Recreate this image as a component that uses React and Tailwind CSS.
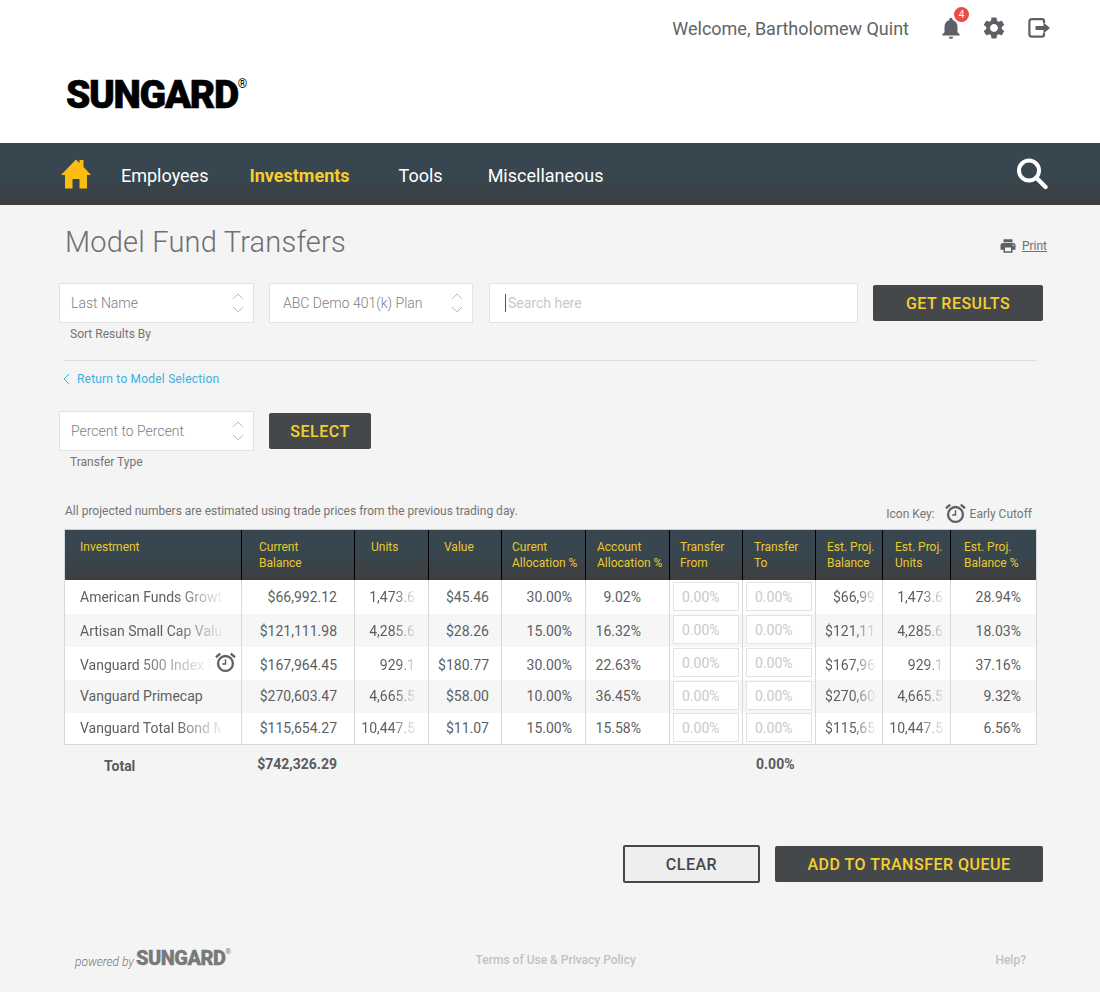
import React from "react";
import { MdNotifications, MdSettings, MdPrint } from "react-icons/md";

function Home() {
  return (
    <svg width="30" height="30" viewBox="0 0 30 30" className="text-[#fbbd14]" fill="currentColor">
      <path d="M15 .5 L18.5 4 V1 H22.5 V8 L30 16 H26 V29.5 H18.5 V20 H11.5 V29.5 H4 V16 H0 Z" />
    </svg>
  );
}

function Exit() {
  return (
    <svg width="24" height="20" viewBox="0 0 24 20" fill="none">
      <path d="M16 5 V3.2 Q16 1.2 14 1.2 H4 Q1.4 1.2 1.4 3.6 V16.2 Q1.4 18.6 4 18.6 H14 Q16 18.6 16 16.8 V15" stroke="#5d6166" strokeWidth="2.2" />
      <path d="M7.5 8 H15.5 V4.5 L22 10 L15.5 15.5 V12 H7.5 Z" fill="#5d6166" />
    </svg>
  );
}

function Search() {
  return (
    <svg width="32" height="32" viewBox="0 0 32 32" fill="none" stroke="#fff" strokeWidth="4">
      <circle cx="13" cy="12.6" r="10" />
      <path d="M20.5 20 L29.5 29" strokeLinecap="round" strokeWidth="4.4" />
    </svg>
  );
}

function Alarm({ size = 22 }) {
  return (
    <svg width={size} height={size} viewBox="0 0 22 22" fill="none" stroke="#5d6166">
      <circle cx="11" cy="12" r="7.8" strokeWidth="2.4" />
      <path d="M11 7.5 V12.5 H7.5" strokeWidth="1.5" />
      <path d="M1 5.5 L5.5 1.8 M21 5.5 L16.5 1.8" strokeWidth="2.4" />
    </svg>
  );
}

function Stepper() {
  return (
    <svg width="12" height="22" viewBox="0 0 12 22" fill="none" stroke="#b9b9b9" strokeWidth="1">
      <path d="M1 7 L6 2 L11 7" />
      <path d="M1 15 L6 20 L11 15" />
    </svg>
  );
}

function Select({ label, width, pad = "pl-[11px]" }) {
  return (
    <div className={`${width} ${pad} h-[40px] bg-white border border-[#e2e2e2] flex items-center justify-between pr-[9px] text-[14px] text-[#808080] font-light`}>
      <span>{label}</span>
      <Stepper />
    </div>
  );
}

function DarkButton({ children, className = "" }) {
  return (
    <button className={`h-[36px] pt-[2px] rounded-[2px] bg-[#45484b] text-[#f4d02f] text-[16px] font-medium tracking-[0.5px] ${className}`}>
      {children}
    </button>
  );
}

const cols = "grid grid-cols-[177px_113px_74px_73px_84px_84px_73px_73px_67px_68px_84px]";

const headers = [
  ["Investment", "", "pl-[15px]"],
  ["Current", "Balance", "pl-[17px]"],
  ["Units", "", "pl-[16px]"],
  ["Value", "", "pl-[15px]"],
  ["Curent", "Allocation %", "pl-[10px]"],
  ["Account", "Allocation %", "pl-[11px]"],
  ["Transfer", "From", "pl-[10px]"],
  ["Transfer", "To", "pl-[11px]"],
  ["Est. Proj.", "Balance", "pl-[11px]"],
  ["Est. Proj.", "Units", "pl-[12px]"],
  ["Est. Proj.", "Balance %", "pl-[13px]"],
];

const rows = [
  { h: "h-[34px]", bg: "bg-white", pt: "", im: "mt-[2px]", name: "American Funds Growth", fade: "[mask-image:linear-gradient(to_right,black_68%,rgba(0,0,0,0.1)_100%)]", bal: "$66,992.12", units: "1,473.6", val: "$45.46", cur: "30.00%", acc: "9.02%", pb: "$66,99", pu: "1,473.6", pp: "28.94%" },
  { h: "h-[33px]", bg: "bg-[#f6f6f6]", pt: "pt-[1px]", im: "mt-[1px]", name: "Artisan Small Cap Value", fade: "[mask-image:linear-gradient(to_right,black_68%,rgba(0,0,0,0.1)_100%)]", bal: "$121,111.98", units: "4,285.6", val: "$28.26", cur: "15.00%", acc: "16.32%", pb: "$121,11", pu: "4,285.6", pp: "18.03%" },
  { h: "h-[33px]", bg: "bg-white", pt: "pt-[3px]", im: "mt-[1px]", name: "Vanguard 500 Index Fund", alarm: true, fade: "[mask-image:linear-gradient(to_right,black_40%,rgba(0,0,0,0.05)_92%)]", bal: "$167,964.45", units: "929.1", val: "$180.77", cur: "30.00%", acc: "22.63%", pb: "$167,96", pu: "929.1", pp: "37.16%" },
  { h: "h-[33px]", bg: "bg-[#f6f6f6]", pt: "", im: "mt-[1px]", name: "Vanguard Primecap", fade: "", bal: "$270,603.47", units: "4,665.5", val: "$58.00", cur: "10.00%", acc: "36.45%", pb: "$270,60", pu: "4,665.5", pp: "9.32%" },
  { h: "h-[31px]", bg: "bg-white", pt: "", im: "mt-0", name: "Vanguard Total Bond Market", fade: "[mask-image:linear-gradient(to_right,black_68%,rgba(0,0,0,0.1)_100%)]", bal: "$115,654.27", units: "10,447.5", val: "$11.07", cur: "15.00%", acc: "15.58%", pb: "$115,65", pu: "10,447.5", pp: "6.56%" },
];

const fadeEnd = "[mask-image:linear-gradient(to_right,black_55%,rgba(0,0,0,0.1)_100%)]";
const cell = "flex items-center border-r border-[#d6d9dd] text-[14px] text-[#5c5f62] whitespace-nowrap overflow-hidden";

function PercentInput({ im }) {
  return (
    <div className="border-r border-[#d6d9dd] overflow-hidden">
      <input
        readOnly
        placeholder="0.00%"
        className={`${im} block w-[66px] h-[29px] ml-[3px] pl-[8px] bg-white border border-[#e3e3e3] text-[14px] placeholder:text-[#c9c9c9] outline-none`}
      />
    </div>
  );
}

export default function App() {
  return (
    <div className="w-[1100px] min-h-[992px] bg-[#f4f4f4] font-['Roboto',sans-serif]">
      <header className="h-[143px] bg-white pl-[66px] pr-[48px]">
        <div className="h-[56px] flex items-center justify-end">
          <span className="text-[18px] text-[#606468] mr-[29px]">Welcome, Bartholomew Quint</span>
          <span className="relative mr-[17px] flex">
            <MdNotifications size={26} color="#5d6166" />
            <span className="absolute -top-[8px] left-[16px] w-[15px] h-[15px] rounded-full bg-[#ef4a45] text-white text-[10px] flex items-center justify-center">4</span>
          </span>
          <MdSettings size={26} color="#5d6166" className="mr-[21px]" />
          <Exit />
        </div>
        <div className="mt-[17px] flex items-start">
          <span className="text-[39px] leading-[44px] font-black text-black tracking-[-1.4px] [-webkit-text-stroke:0.6px_black]">SUNGARD</span>
          <span className="text-[12px] leading-[12px] text-black mt-[5px]">®</span>
        </div>
      </header>

      <nav className="h-[62px] bg-[linear-gradient(to_bottom,#37464f_0%,#37464f_55%,#3e3e3f_100%)] flex items-center pl-[61px] pr-[52px] text-[18px] text-white">
        <Home />
        <div className="flex pt-[2px]">
          <span className="ml-[30px]">Employees</span>
          <span className="ml-[41px] font-bold text-[#f7cd2a]">Investments</span>
          <span className="ml-[49px]">Tools</span>
          <span className="ml-[45px]">Miscellaneous</span>
        </div>
        <span className="ml-auto flex"><Search /></span>
      </nav>

      <main className="pl-[59px] pr-[57px]">
        <div className="pt-[20px] pl-[6px] h-[78px] flex items-start justify-between">
          <h1 className="text-[29px] leading-[34px] font-light text-[#6f6f6f] tracking-[0.2px]">Model Fund Transfers</h1>
          <div className="flex items-center mt-[12px] mr-[-4px] text-[12px] text-[#6f6f6f]">
            <MdPrint size={18} color="#5d6166" className="mr-[5px]" />
            <span className="underline">Print</span>
          </div>
        </div>

        <div className="flex items-start">
          <div>
            <Select label="Last Name" width="w-[195px]" />
            <div className="pl-[11px] mt-[4px] text-[12px] leading-[14px] text-[#757575]">Sort Results By</div>
          </div>
          <div className="ml-[15px]"><Select label="ABC Demo 401(k) Plan" width="w-[204px]" pad="pl-[13px]" /></div>
          <div className="ml-[16px] w-[369px] h-[40px] bg-white border border-[#e2e2e2] flex items-center pl-[15px]">
            <span className="w-px h-[18px] bg-[#555] mr-[2px]"></span>
            <span className="text-[14px] text-[#c9c9c9]">Search here</span>
          </div>
          <DarkButton className="ml-[15px] mt-[2px] w-[170px]">GET RESULTS</DarkButton>
        </div>

        <div className="mt-[19px] ml-[4px] mr-[6px] border-t border-[#dcdcdc]"></div>

        <div className="mt-[10px] ml-[4px] flex items-center text-[12px] leading-[16px] tracking-[0.2px] text-[#3eaee0]">
          <svg width="7" height="12" viewBox="0 0 7 12" fill="none" stroke="#3eaee0" strokeWidth="1" className="mr-[7px]"><path d="M6 1 L1 6 L6 11" /></svg>
          Return to Model Selection
        </div>

        <div className="mt-[24px] flex items-start">
          <div>
            <Select label="Percent to Percent" width="w-[195px]" />
            <div className="pl-[11px] mt-[4px] text-[12px] leading-[14px] text-[#757575]">Transfer Type</div>
          </div>
          <DarkButton className="ml-[15px] mt-[2px] w-[102px]">SELECT</DarkButton>
        </div>

        <div className="mt-[24px] ml-[6px] w-[972px] flex items-end justify-between h-[36px] pb-[4px] pr-[5px] text-[12px] text-[#757575]">
          <span className="mb-[5px]">All projected numbers are estimated using trade prices from the previous trading day.</span>
          <span className="flex items-center mb-[1px]">
            <span>Icon Key:</span>
            <span className="flex ml-[10px] mr-[4px]"><Alarm size={21} /></span>
            <span>Early Cutoff</span>
          </span>
        </div>

        <div className="ml-[5px] w-[973px] border border-[#d6d9dd] border-t-[#c8ccd0]">
          <div className={`${cols} h-[50px] bg-[linear-gradient(to_bottom,#37464f_0%,#37464f_45%,#3e3e3f_100%)]`}>
            {headers.map((h, i) => (
              <div key={i} className={`${h[2]} pt-[9px] text-[12px] leading-[16px] text-[#e9c92f] whitespace-nowrap ${i < 10 ? "border-r border-black" : ""}`}>
                <div>{h[0]}</div>
                {h[1] && <div>{h[1]}</div>}
              </div>
            ))}
          </div>
          {rows.map((r) => (
            <div key={r.name} className={`${cols} ${r.h} ${r.bg}`}>
              <div className={`${cell} ${r.pt} relative pl-[15px] text-[#4a4c4f]`}>
                <span className={`block w-[141px] overflow-hidden ${r.fade}`}>{r.name}</span>
                {r.alarm && (
                  <span className="absolute right-[5px] top-[5px] flex"><Alarm size={21} /></span>
                )}
              </div>
              <div className={`${cell} ${r.pt} justify-end pr-[17px]`}>{r.bal}</div>
              <div className={`${cell} ${r.pt} justify-end pr-[13px]`}><span className={fadeEnd}>{r.units}</span></div>
              <div className={`${cell} ${r.pt} justify-end pr-[12px]`}>{r.val}</div>
              <div className={`${cell} ${r.pt} justify-end pr-[13px]`}>{r.cur}</div>
              <div className={`${cell} ${r.pt} justify-end pr-[28px]`}>{r.acc}</div>
              <PercentInput im={r.im} />
              <PercentInput im={r.im} />
              <div className={`${cell} ${r.pt} justify-end pr-[7px]`}><span className={fadeEnd}>{r.pb}</span></div>
              <div className={`${cell} ${r.pt} justify-end pr-[7px]`}><span className={fadeEnd}>{r.pu}</span></div>
              <div className={`${cell} ${r.pt} justify-end pr-[14px] border-r-0`}>{r.pp}</div>
            </div>
          ))}
        </div>

        <div className={`${cols} ml-[6px] w-[971px] mt-[9px] text-[14px] font-bold text-[#595b5e]`}>
          <div className="pl-[39px] pt-[2px]">Total</div>
          <div className="pr-[18px] text-right">$742,326.29</div>
          <div className="col-start-8 pl-[13px]">0.00%</div>
        </div>

        <div className="mt-[68px] flex justify-end items-center gap-[15px]">
          <button className="w-[137px] h-[38px] pt-[2px] rounded-[2px] border-2 border-[#45484b] bg-[#eeeeee] text-[16px] font-medium tracking-[0.5px] text-[#45484b]">CLEAR</button>
          <DarkButton className="w-[268px]">ADD TO TRANSFER QUEUE</DarkButton>
        </div>

        <footer className="mt-[65px] pl-[16px] pr-[17px] flex items-center justify-between h-[24px] text-[12px] font-medium text-[#c2c2c2]">
          <div className="flex items-center w-[230px]">
            <span className="italic font-light text-[#777] text-[12px] mt-[4px]">powered by</span>
            <span className="ml-[2px] mb-[5px] text-[20px] leading-[24px] font-black tracking-[-0.5px] text-[#77797b] [-webkit-text-stroke:0.3px_#77797b]">SUNGARD</span>
            <span className="text-[7px] text-[#77797b] mb-[16px]">®</span>
          </div>
          <span className="mr-[189px]">Terms of Use &amp; Privacy Policy</span>
          <span>Help?</span>
        </footer>
      </main>
    </div>
  );
}
